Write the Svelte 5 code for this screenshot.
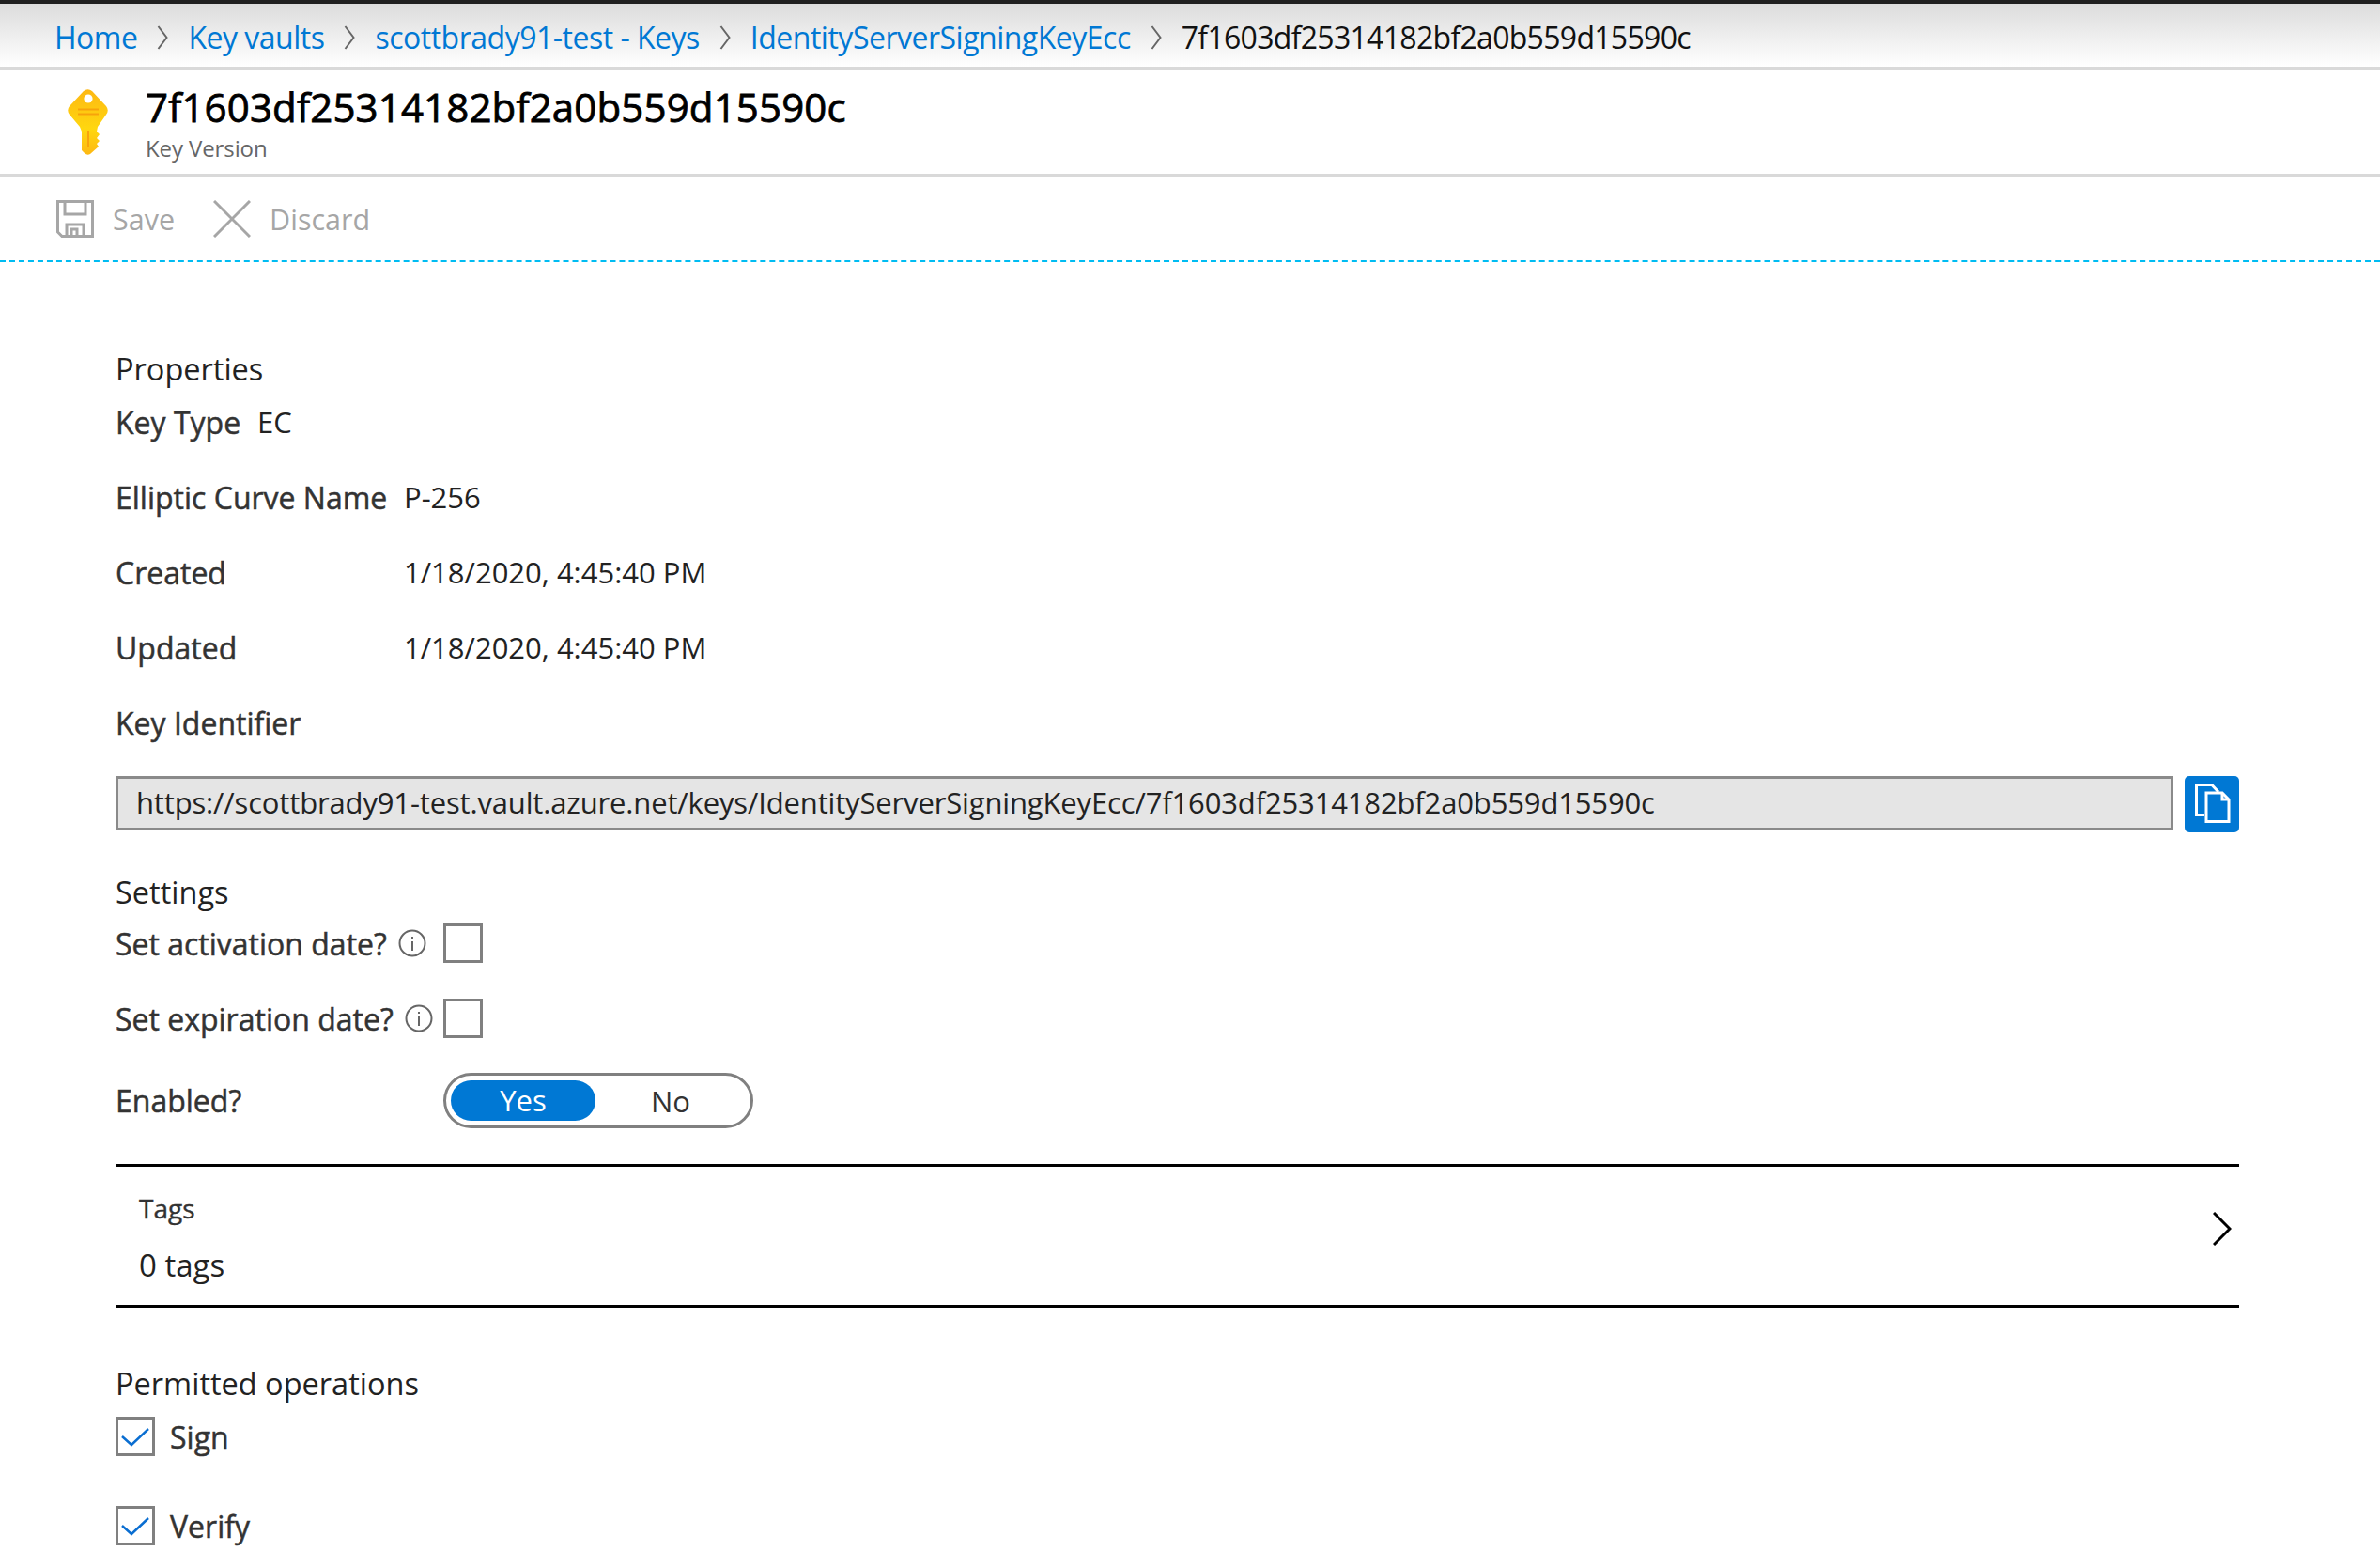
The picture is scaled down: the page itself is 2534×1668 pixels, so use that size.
<script>
  const crumbs = ['Home', 'Key vaults', 'scottbrady91-test - Keys', 'IdentityServerSigningKeyEcc'];
  const version = '7f1603df25314182bf2a0b559d15590c';
  const keyUrl = 'https://scottbrady91-test.vault.azure.net/keys/IdentityServerSigningKeyEcc/' + version;
  const fields = [
    { label: 'Elliptic Curve Name', value: 'P-256' },
    { label: 'Created', value: '1/18/2020, 4:45:40 PM' },
    { label: 'Updated', value: '1/18/2020, 4:45:40 PM' }
  ];
  const settings = ['Set activation date?', 'Set expiration date?'];
  const operations = ['Sign', 'Verify'];
</script>

<main>
  <nav class="crumbs">
    {#each crumbs as crumb}
      <a href="#top">{crumb}</a>
      <svg class="sep" viewBox="0 0 12 26" aria-hidden="true"><path d="M1.5 1 L10.5 13 L1.5 25" /></svg>
    {/each}
    <span class="current">{version}</span>
  </nav>

  <header class="title">
    <svg class="key" viewBox="0 0 43 70" aria-hidden="true">
      <defs>
        <linearGradient id="keyFill" x1="0" y1="0" x2="0" y2="1">
          <stop offset="0" stop-color="#fdb813" />
          <stop offset="0.6" stop-color="#ffd70f" />
          <stop offset="1" stop-color="#fdb813" />
        </linearGradient>
      </defs>
      <path fill="url(#keyFill)" d="M17 2 Q21.5 -1.5 26 2 L41 18 Q44.5 22.5 41 27 L32 40 L31 45 L34 48 L31 52 L34 55 L31 58 L33 61 L24 69 Q21 71 18 68 L15 65 L15 45 L13 40 L2 27 Q-1.5 22.5 2 18 Z" />
      <circle cx="22" cy="10" r="4.6" fill="#fff" />
      <path d="M11 21.5 H33 M11 26.5 H33 M22 44 V62" stroke="#f7a30c" stroke-width="2" fill="none" />
    </svg>
    <div>
      <h1>{version}</h1>
      <p>Key Version</p>
    </div>
  </header>

  <div class="toolbar">
    <svg class="tool" viewBox="0 0 40 40" aria-hidden="true">
      <path d="M1.5 1.5 H38.5 V38.5 H6 L1.5 34 Z M9 1.5 V15 H31 V1.5 M11 38.5 V26 H29 V38.5 M16 38.5 V31 H22 V38.5" />
    </svg>
    <span>Save</span>
    <svg class="tool x" viewBox="0 0 40 40" aria-hidden="true">
      <path d="M1 1 L39 39 M39 1 L1 39" />
    </svg>
    <span>Discard</span>
  </div>

  <section class="content">
    <h2>Properties</h2>
    <div class="row first">
      <b>Key Type</b>
      <span>EC</span>
    </div>
    {#each fields as field}
      <div class="row">
        <b class="wide">{field.label}</b>
        <span>{field.value}</span>
      </div>
    {/each}
    <div class="row"><b>Key Identifier</b></div>

    <div class="identifier">
      <div class="urlbox">{keyUrl}</div>
      <button class="copy" aria-label="Copy">
        <svg viewBox="0 0 58 60" aria-hidden="true">
          <path d="M21 41.5 H12.5 V9.5 H29 L36 17" />
          <path d="M23 18 H40 L47 25 V48.5 H23 Z" />
          <path d="M40 18 V25 H47" />
        </svg>
      </button>
    </div>

    <h2 class="settings">Settings</h2>
    {#each settings as setting, i}
      <div class="row setting" class:first={i === 0}>
        <div class="setlabel">
          <b>{setting}</b>
          <svg class="info" viewBox="0 0 30 30" aria-hidden="true">
            <circle cx="15" cy="15" r="13.5" />
            <path d="M15 13 V23 M15 8 V10" />
          </svg>
        </div>
        <span class="box"></span>
      </div>
    {/each}

    <div class="row enabled">
      <b class="wider">Enabled?</b>
      <div class="toggle">
        <span class="on">Yes</span>
        <span class="off">No</span>
      </div>
    </div>

    <div class="tags">
      <div>
        <div class="tagtitle">Tags</div>
        <div class="tagcount">0 tags</div>
      </div>
      <svg class="more" viewBox="0 0 20 36" aria-hidden="true"><path d="M1 1 L18 18 L1 35" /></svg>
    </div>

    <h2 class="permitted">Permitted operations</h2>
    {#each operations as op, i}
      <div class="op" class:first={i === 0}>
        <span class="box">
          <svg viewBox="0 0 36 36" aria-hidden="true"><path d="M4 18 L14 27 L32 10" /></svg>
        </span>
        <b>{op}</b>
      </div>
    {/each}
  </section>
</main>

<style>
  :global(body) {
    margin: 0;
    background: #fff;
    overflow: hidden;
  }
  main {
    width: 2534px;
    height: 1668px;
    overflow: hidden;
    font-family: "Open Sans", "Noto Sans", sans-serif;
    color: #222;
  }
  .crumbs {
    box-sizing: border-box;
    height: 74px;
    padding: 4px 0 0 58px;
    display: flex;
    align-items: center;
    gap: 21px;
    font-size: 32px;
    letter-spacing: -0.5px;
    border-top: 4px solid #1f1f1f;
    border-bottom: 3px solid #d9d9d9;
    background: linear-gradient(#dcdcdc, #ffffff);
  }
  .crumbs a {
    color: #0078d4;
    text-decoration: none;
  }
  .current {
    color: #111;
    letter-spacing: -0.7px;
  }
  .sep {
    width: 12px;
    height: 26px;
    fill: none;
    stroke: #666;
    stroke-width: 2;
  }
  .title {
    box-sizing: border-box;
    height: 114px;
    display: flex;
    align-items: center;
    gap: 40px;
    padding-left: 72px;
    border-bottom: 3px solid #d9d9d9;
  }
  .key {
    width: 43px;
    height: 70px;
  }
  h1 {
    margin: 0;
    font-size: 42px;
    font-weight: 400;
    line-height: 56px;
    color: #000;
    letter-spacing: 0.15px;
    -webkit-text-stroke: 0.8px #000;
  }
  .title p {
    margin: 0;
    font-size: 24px;
    line-height: 32px;
    letter-spacing: -0.1px;
    color: #666;
  }
  .toolbar {
    box-sizing: border-box;
    height: 91px;
    display: flex;
    align-items: center;
    padding-left: 60px;
    border-bottom: 2px dashed #00bcf2;
    font-size: 30.5px;
    color: #a6a6a6;
  }
  .tool {
    width: 40px;
    height: 40px;
    margin-right: 20px;
    fill: none;
    stroke: #a6a6a6;
    stroke-width: 3;
  }
  .tool.x {
    margin-left: 41px;
  }
  .content {
    box-sizing: border-box;
    width: 2384px;
    padding: 90px 0 0 123px;
  }
  h2 {
    margin: 0;
    font-size: 32.5px;
    font-weight: 400;
    line-height: 48px;
    color: #222;
  }
  b {
    font-size: 32px;
    font-weight: 400;
    color: #333;
    white-space: nowrap;
    -webkit-text-stroke: 0.5px #333;
  }
  .row {
    display: flex;
    align-items: center;
    gap: 18px;
    height: 48px;
    margin-top: 32px;
    font-size: 31px;
  }
  .row.first {
    margin-top: 8px;
  }
  .row.setting.first {
    margin-top: 6px;
  }
  .wide {
    width: 289px;
  }
  .identifier {
    display: flex;
    align-items: center;
    gap: 12px;
    margin-top: 31px;
  }
  .urlbox {
    box-sizing: border-box;
    flex: 1;
    height: 58px;
    padding-left: 19px;
    line-height: 50px;
    font-size: 31px;
    background: #e5e5e5;
    border: 3px solid #8a8a8a;
    color: #222;
    letter-spacing: -0.15px;
  }
  .copy {
    width: 58px;
    height: 60px;
    margin-top: 2px;
    padding: 0;
    border: 0;
    border-radius: 5px;
    background: #0078d4;
  }
  .copy svg {
    display: block;
    width: 58px;
    height: 60px;
    fill: none;
    stroke: #fff;
    stroke-width: 3;
  }
  .settings {
    margin-top: 40px;
  }
  .setting {
    gap: 0;
  }
  .setlabel {
    width: 349px;
    display: flex;
    align-items: center;
    gap: 12px;
  }
  .info {
    width: 30px;
    height: 30px;
    fill: none;
    stroke: #666;
    stroke-width: 2;
  }
  .box {
    box-sizing: border-box;
    flex: none;
    width: 42px;
    height: 42px;
    border: 3px solid #808080;
    background: #fff;
  }
  .box svg {
    display: block;
    width: 36px;
    height: 36px;
    fill: none;
    stroke: #0a6ed1;
    stroke-width: 2.5;
  }
  .enabled {
    margin-top: 34px;
    height: 59px;
    gap: 0;
  }
  .wider {
    width: 349px;
  }
  .toggle {
    box-sizing: border-box;
    width: 330px;
    height: 59px;
    padding: 5px;
    display: flex;
    align-items: center;
    border: 3px solid #808080;
    border-radius: 30px;
    text-align: center;
  }
  .on {
    width: 154px;
    height: 43px;
    line-height: 43px;
    border-radius: 22px;
    background: #0078d4;
    color: #fff;
  }
  .off {
    flex: 1;
    color: #333;
  }
  .tags {
    box-sizing: border-box;
    height: 153px;
    margin-top: 38px;
    padding: 0 8px 0 25px;
    display: flex;
    align-items: center;
    justify-content: space-between;
    border-top: 3px solid #000;
    border-bottom: 3px solid #000;
  }
  .tagtitle {
    margin-top: 4px;
    font-size: 28px;
    line-height: 40px;
    color: #333;
    -webkit-text-stroke: 0.4px #333;
  }
  .tagcount {
    margin-top: 19px;
    font-size: 33px;
    line-height: 44px;
    color: #222;
  }
  .more {
    width: 20px;
    height: 36px;
    margin-bottom: 16px;
    fill: none;
    stroke: #000;
    stroke-width: 3;
  }
  .permitted {
    margin-top: 57px;
  }
  .op {
    display: flex;
    align-items: center;
    gap: 16px;
    height: 48px;
    margin-top: 47px;
    font-size: 31px;
  }
  .op.first {
    margin-top: 8px;
  }
</style>
